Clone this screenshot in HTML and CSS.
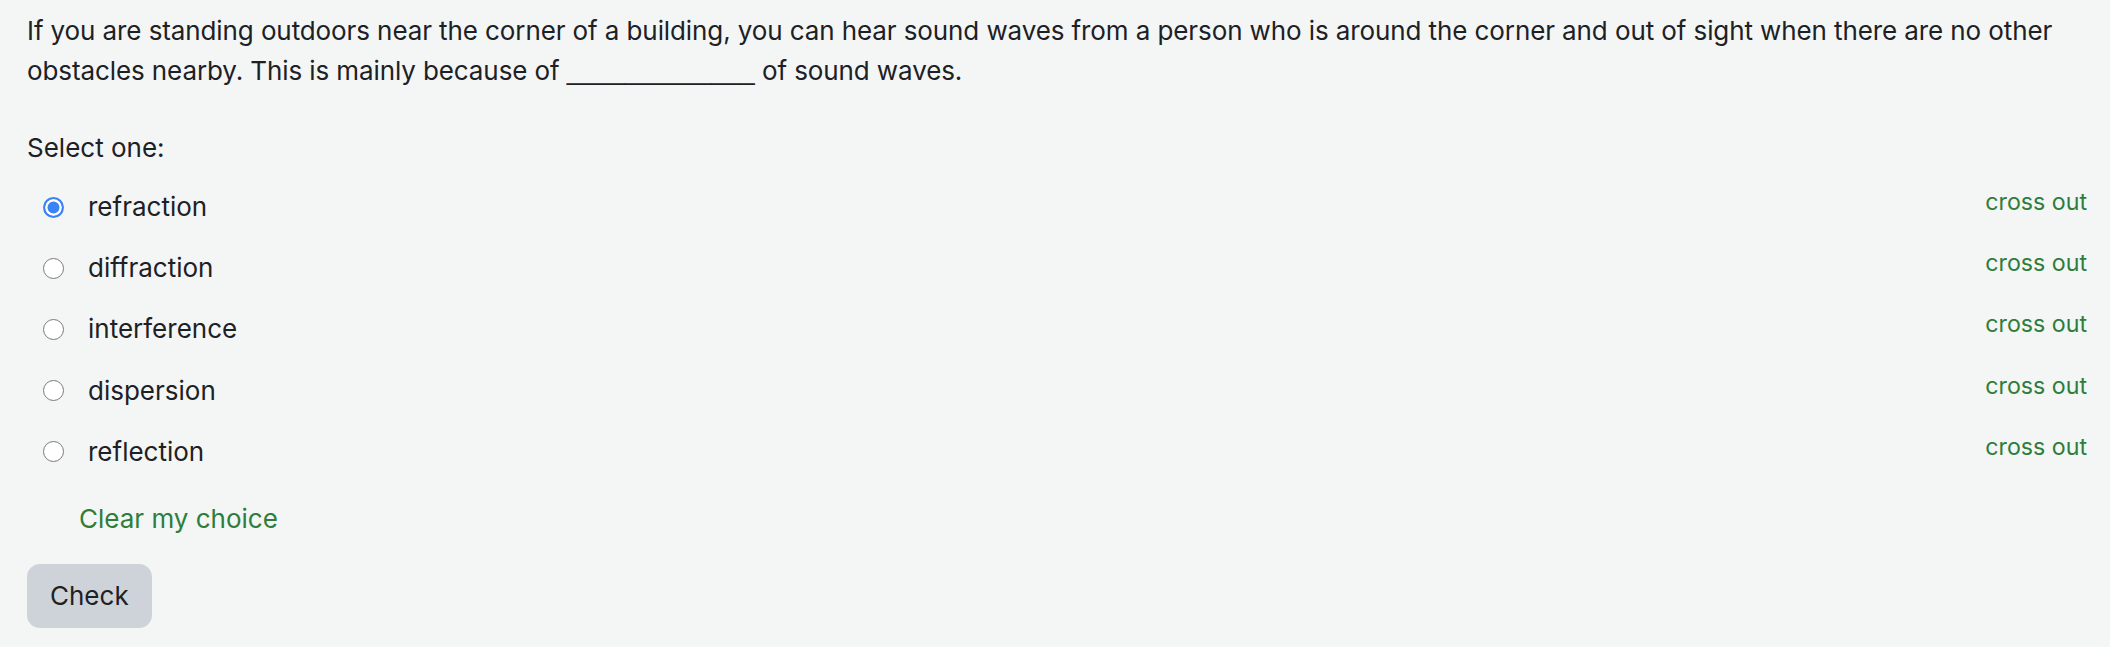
FILE: index.html
```html
<!DOCTYPE html>
<html lang="en">
<head>
<meta charset="utf-8">
<title>Question</title>
<link rel="stylesheet" href="styles.css">
</head>
<body>
<div class="que">
  <div class="qtext">If you are standing outdoors near the corner of a building, you can hear sound waves from a person who is around the corner and out of sight when there are no other obstacles nearby. This is mainly because of <span class="blank">_____________</span> of sound waves.</div>
  <div class="prompt">Select one:</div>
  <div class="answers">
    <div class="row">
      <label class="opt"><span class="radio checked"></span><span class="label">refraction</span></label>
      <a class="cross">cross out</a>
    </div>
    <div class="row">
      <label class="opt"><span class="radio"></span><span class="label">diffraction</span></label>
      <a class="cross">cross out</a>
    </div>
    <div class="row">
      <label class="opt"><span class="radio"></span><span class="label">interference</span></label>
      <a class="cross">cross out</a>
    </div>
    <div class="row">
      <label class="opt"><span class="radio"></span><span class="label">dispersion</span></label>
      <a class="cross">cross out</a>
    </div>
    <div class="row">
      <label class="opt"><span class="radio"></span><span class="label">reflection</span></label>
      <a class="cross">cross out</a>
    </div>
  </div>
  <a class="clear">Clear my choice</a>
  <div class="actions"><button class="check">Check</button></div>
</div>
</body>
</html>
```
FILE: styles.css
```css
html, body {
  margin: 0;
  padding: 0;
  background: #f3f6f5;
}
body {
  font-family: Inter, "Noto Sans", "Liberation Sans", sans-serif;
  font-size: 26px;
  line-height: 40px;
  color: #1d2125;
}
.que {
  padding: 11px 23px 0 27px;
}
.qtext {
  margin: 0;
  letter-spacing: -0.1px;
}
.blank {
  font-family: "Liberation Sans", sans-serif;
  letter-spacing: 0;
}
.prompt {
  margin-top: 37px;
}
.answers {
  margin-top: 8.5px;
  display: flex;
  flex-direction: column;
}
.row {
  display: flex;
  align-items: center;
  justify-content: space-between;
  padding: 10.6px 0;
}
.opt {
  display: flex;
  align-items: center;
}
.radio {
  box-sizing: border-box;
  width: 21px;
  height: 21px;
  margin-left: 16px;
  border-radius: 50%;
  border: 1.5px solid #7a7a7a;
  background: #fff;
}
.radio.checked {
  border: 2px solid #3b82f6;
  background: #3b82f6;
  box-shadow: inset 0 0 0 2.5px #fff;
}
.label {
  margin-left: 24px;
}
.cross {
  font-size: 23.2px;
  line-height: 30px;
  color: #2e7d3b;
  margin-top: -10px;
}
.clear {
  display: block;
  margin-top: 16.5px;
  margin-left: 52px;
  color: #2e7d3b;
}
.actions {
  margin-top: 25px;
}
.check {
  font-family: inherit;
  font-size: 26px;
  line-height: 40px;
  color: #1d2125;
  background: #ced3da;
  border: none;
  border-radius: 13px;
  padding: 12px 23px;
}
```
